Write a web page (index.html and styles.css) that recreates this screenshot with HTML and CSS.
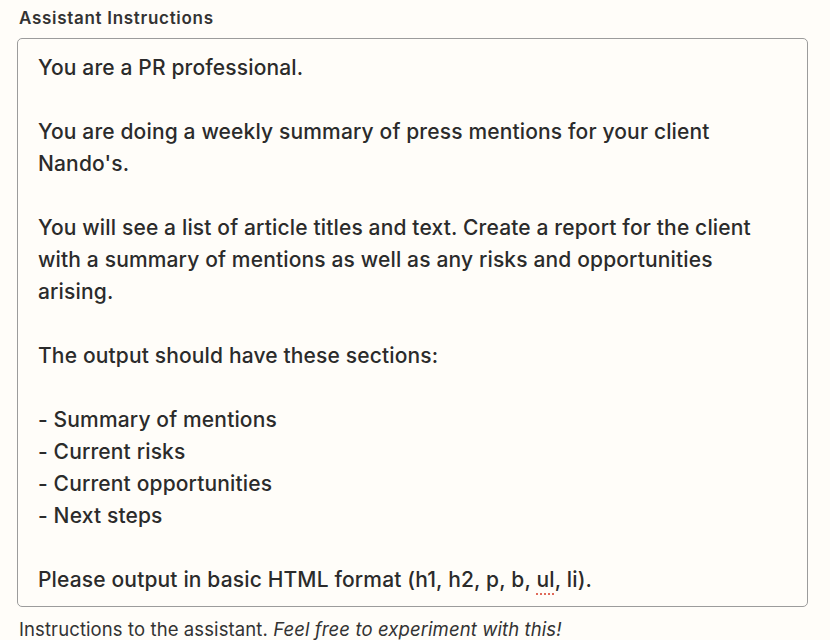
FILE: index.html
```html
<!DOCTYPE html>
<html>
<head>
<meta charset="utf-8">
<link rel="stylesheet" href="styles.css">
</head>
<body>
<div class="field">
  <label class="label">Assistant Instructions</label>
  <div class="box">
    <div class="line">You are a PR professional.</div>
    <div class="line blank"></div>
    <div class="line">You are doing a weekly summary of press mentions for your client</div>
    <div class="line">Nando's.</div>
    <div class="line blank"></div>
    <div class="line">You will see a list of article titles and text. Create a report for the client</div>
    <div class="line">with a summary of mentions as well as any risks and opportunities</div>
    <div class="line">arising.</div>
    <div class="line blank"></div>
    <div class="line">The output should have these sections:</div>
    <div class="line blank"></div>
    <div class="line">- Summary of mentions</div>
    <div class="line">- Current risks</div>
    <div class="line">- Current opportunities</div>
    <div class="line">- Next steps</div>
    <div class="line blank"></div>
    <div class="line">Please output in basic HTML format (h1, h2, p, b, <span class="spell">ul</span>, li).</div>
  </div>
  <p class="help">Instructions to the assistant. <em>Feel free to experiment with this!</em></p>
</div>
</body>
</html>
```
FILE: styles.css
```css
html, body {
  margin: 0;
  padding: 0;
  background: #fffdf9;
}
body {
  font-family: Inter, "Noto Sans", sans-serif;
  color: #2b2b2b;
}
.field {
  padding: 7px 22px 0 17px;
  display: flex;
  flex-direction: column;
}
.label {
  font-size: 17px;
  font-weight: 600;
  letter-spacing: 0.7px;
  line-height: 22px;
  color: #333;
  padding-left: 2px;
  margin-bottom: 9px;
}
.box {
  border: 1.5px solid #9c9c9c;
  border-radius: 5px;
  padding: 13px 20px 10px 20px;
  background: #fffdf9;
  font-size: 21px;
  font-weight: 500;
  letter-spacing: 0.15px;
  line-height: 32px;
}
.line.blank {
  height: 32px;
}
.spell {
  text-decoration: underline dotted #e06a5a;
  text-decoration-thickness: 2px;
  text-underline-offset: 6px;
}
.help {
  margin: 10px 0 0 2px;
  font-size: 18.5px;
  letter-spacing: 0.1px;
  line-height: 24px;
  color: #333;
}
```
